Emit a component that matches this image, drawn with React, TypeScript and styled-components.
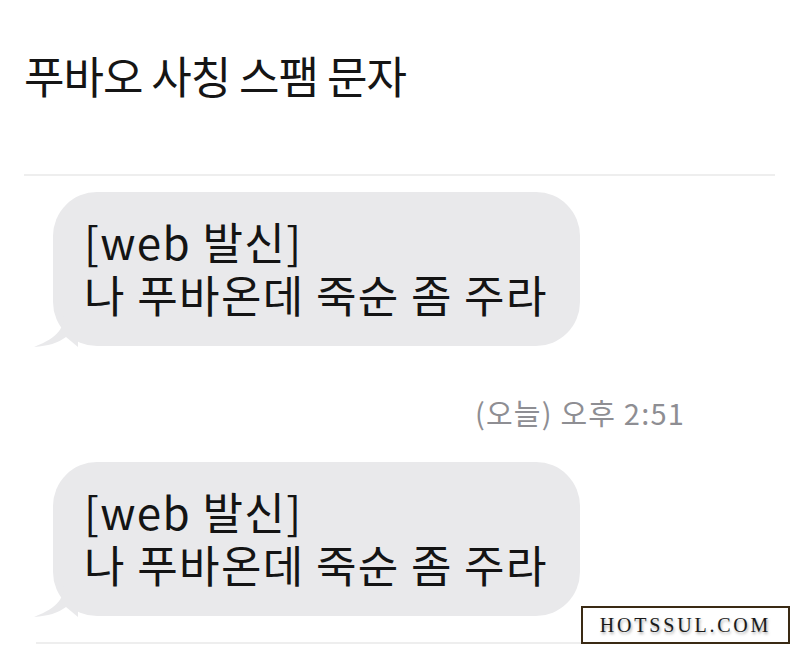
import React from "react"
import styled, { createGlobalStyle } from "styled-components"

const GlobalStyle = createGlobalStyle`
  html, body {
    margin: 0;
    padding: 0;
    background: #ffffff;
  }
  body {
    font-family: "Noto Sans CJK KR", "Noto Sans", sans-serif;
    color: #151515;
  }
`

const Page = styled.div`
  position: relative;
  width: 800px;
  height: 655px;
  overflow: hidden;
  display: flex;
  flex-direction: column;
`

const Title = styled.h1`
  margin: 0;
  padding: 45px 0 0 24px;
  height: 174px;
  box-sizing: border-box;
  font-size: 44px;
  font-weight: 400;
  line-height: 60px;
  letter-spacing: -1px;
`

const Divider = styled.div<{ $inset: number }>`
  height: 2px;
  margin: 0 25px 0 ${p => p.$inset}px;
  background: #eeeeee;
`

const Thread = styled.div`
  display: flex;
  flex-direction: column;
  padding: 16px 0 0 53px;
`

const Bubble = styled.div`
  position: relative;
  align-self: flex-start;
  background: #e9e9eb;
  border-radius: 44px;
  padding: 23px 32px 25px 31px;
  font-size: 44px;
  line-height: 53px;
  letter-spacing: 1.4px;
  color: #141414;
  white-space: pre;
`

const Tail = styled.svg`
  position: absolute;
  left: -19px;
  bottom: -1px;
  width: 44px;
  height: 34px;
`

const Stamp = styled.div`
  align-self: flex-end;
  margin: 50px 115px 34px 0;
  font-size: 29px;
  line-height: 32px;
  color: #8e8e93;
  letter-spacing: 1.2px;
`

const Gap = styled.div`
  height: 26px;
`

const Watermark = styled.div`
  position: absolute;
  left: 581px;
  top: 606px;
  width: 209px;
  height: 38px;
  box-sizing: border-box;
  border: 2px solid #3a2a14;
  background: #ffffff;
  display: flex;
  align-items: center;
  justify-content: center;
  font-family: "Liberation Serif", "DejaVu Serif", serif;
  font-size: 20px;
  letter-spacing: 2.8px;
  color: #1a1a1a;
  text-shadow: 1px 2px 3px rgba(0, 0, 0, 0.35);
`

const BubbleTail = () => (
  <Tail viewBox="0 0 44 34">
    <path
      d="M30 0 C30 14 26 24 0 34 C14 33 24 30 32 24 L44 34 L44 0 Z"
      fill="#e9e9eb"
    />
  </Tail>
)

const Message = ({ text }: { text: string }) => (
  <Bubble>
    <BubbleTail />
    {text}
  </Bubble>
)

const spam = "[web 발신]\n나 푸바온데 죽순 좀 주라"

export default function App() {
  return (
    <>
      <GlobalStyle />
      <Page>
        <Title>푸바오 사칭 스팸 문자</Title>
        <Divider $inset={24} />
        <Thread>
          <Message text={spam} />
          <Stamp>(오늘) 오후 2:51</Stamp>
          <Message text={spam} />
          <Gap />
        </Thread>
        <Divider $inset={36} />
        <Watermark>HOTSSUL.COM</Watermark>
      </Page>
    </>
  )
}
